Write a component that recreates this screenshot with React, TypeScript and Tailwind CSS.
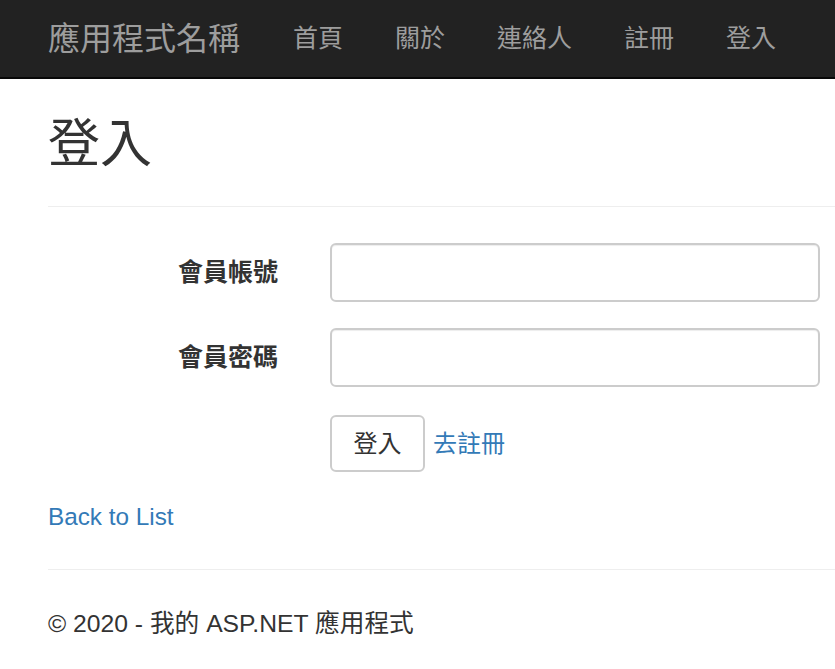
import React from "react";

const navItems = ["首頁", "關於", "連絡人", "註冊", "登入"];

const fontStack = {
  fontFamily: '"Liberation Sans", "Noto Sans CJK TC", sans-serif',
};

export default function App() {
  return (
    <div className="min-h-screen bg-white text-[#333]" style={fontStack}>
      {/* navbar */}
      <nav className="flex h-[79px] items-center border-b-2 border-[#080808] bg-[#222] pl-[48px]">
        <a href="#" className="pr-[27px] text-[32px] leading-none text-[#9d9d9d]">
          應用程式名稱
        </a>
        <ul className="flex">
          {navItems.map((item) => (
            <li key={item}>
              <a href="#" className="block px-[26px] text-[25px] leading-none text-[#9d9d9d]">
                {item}
              </a>
            </li>
          ))}
        </ul>
      </nav>

      <main className="pl-[48px]">
        <h2 className="mt-[37px] text-[52px] font-normal leading-[57px] text-[#333]">登入</h2>
        <hr className="mt-[33px] border-t border-[#eee]" />

        <form className="mt-[36px] flex flex-col pr-[15px]">
          <div className="flex items-center">
            <label className="w-[230px] text-right text-[25px] font-bold leading-none">會員帳號</label>
            <input
              type="text"
              className="ml-[52px] h-[59px] flex-1 rounded-[6px] border-2 border-[#ccc] bg-white px-3 text-[22px] shadow-[inset_0_1px_1px_rgba(0,0,0,0.075)] outline-none"
            />
          </div>
          <div className="mt-[26px] flex items-center">
            <label className="w-[230px] text-right text-[25px] font-bold leading-none">會員密碼</label>
            <input
              type="password"
              className="ml-[52px] h-[59px] flex-1 rounded-[6px] border-2 border-[#ccc] bg-white px-3 text-[22px] shadow-[inset_0_1px_1px_rgba(0,0,0,0.075)] outline-none"
            />
          </div>
          <div className="mt-[28px] flex items-center pl-[282px]">
            <button
              type="button"
              className="h-[57px] w-[95px] rounded-[6px] border-2 border-[#ccc] bg-white text-[24px] leading-none text-[#333]"
            >
              登入
            </button>
            <a href="#" className="ml-[8px] text-[24px] leading-none text-[#337ab7]">
              去註冊
            </a>
          </div>
        </form>

        <div className="mt-[28px] text-[24.3px] leading-[34px]">
          <a href="#" className="text-[#337ab7]">
            Back to List
          </a>
        </div>

        <hr className="mt-[35px] border-t border-[#eee]" />
        <footer className="mt-[37px] text-[24.7px] leading-[34px] text-[#333]">
          <p>© 2020 - 我的 ASP.NET 應用程式</p>
        </footer>
      </main>
    </div>
  );
}
